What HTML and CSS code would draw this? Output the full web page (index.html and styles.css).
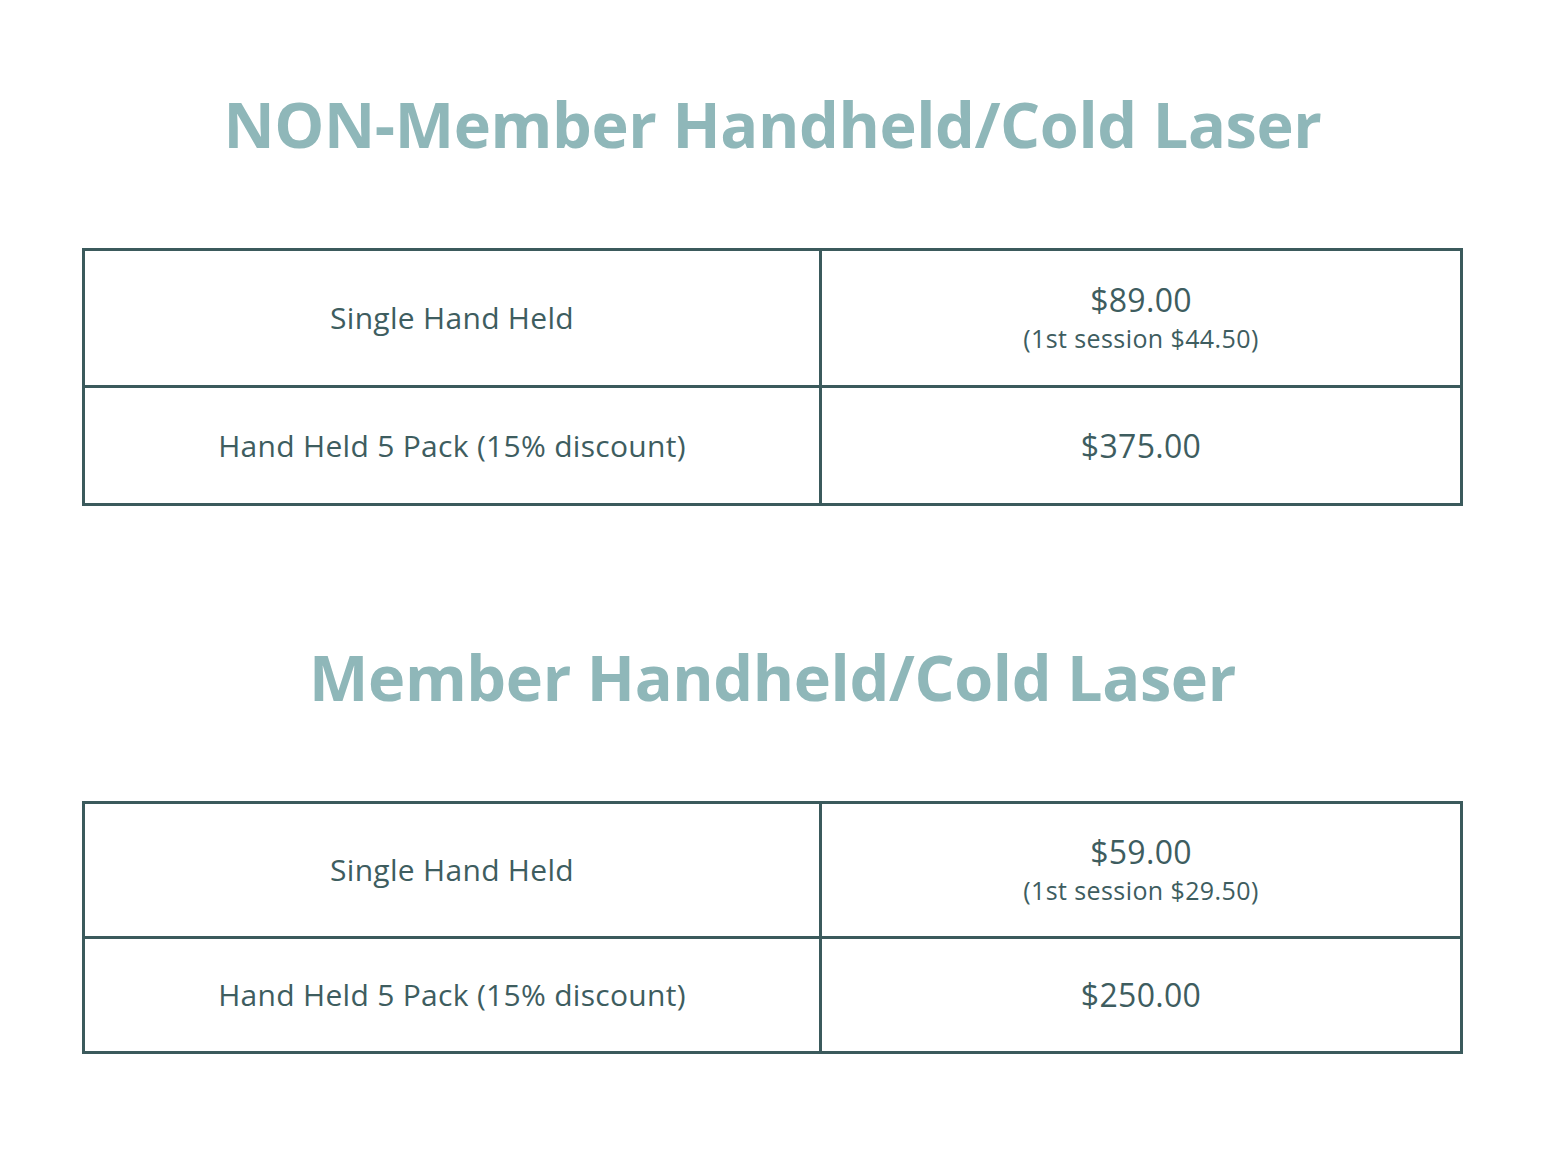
FILE: index.html
```html
<!DOCTYPE html>
<html>
<head>
<meta charset="utf-8">
<link rel="stylesheet" href="styles.css">
</head>
<body>
<main class="page">
  <section class="block">
    <h1 class="title">NON-Member Handheld/Cold Laser</h1>
    <table class="prices">
      <tr class="row-tall">
        <td class="name">Single Hand Held</td>
        <td class="price"><div class="amount">$89.00</div><div class="note">(1st session $44.50)</div></td>
      </tr>
      <tr class="row-short">
        <td class="name">Hand Held 5 Pack (15% discount)</td>
        <td class="price"><div class="amount">$375.00</div></td>
      </tr>
    </table>
  </section>
  <section class="block block-second">
    <h1 class="title">Member Handheld/Cold Laser</h1>
    <table class="prices prices-second">
      <tr class="row-tall">
        <td class="name">Single Hand Held</td>
        <td class="price"><div class="amount">$59.00</div><div class="note">(1st session $29.50)</div></td>
      </tr>
      <tr class="row-short">
        <td class="name">Hand Held 5 Pack (15% discount)</td>
        <td class="price"><div class="amount">$250.00</div></td>
      </tr>
    </table>
  </section>
</main>
</body>
</html>
```
FILE: styles.css
```css
* { box-sizing: border-box; }
html, body { margin: 0; padding: 0; background: #ffffff; }
body { font-family: "Open Sans", "Noto Sans", sans-serif; color: #3e5d5f; }
.page { padding: 84px 82px 0 82px; }
.title {
  margin: 0;
  text-align: center;
  font-size: 63px;
  line-height: 80px;
  font-weight: 700;
  color: #8fb7b9;
  letter-spacing: -0.4px;
}
.prices {
  margin-top: 84px;
  width: 100%;
  border-collapse: collapse;
  border: 3px solid #3b5a5c;
}
.prices td {
  border: 3px solid #3b5a5c;
  text-align: center;
  vertical-align: middle;
  padding: 0;
}
.prices td.name { width: 737px; }
.row-tall { height: 137px; }
.row-short { height: 118px; }
.prices-second .row-tall { height: 135px; }
.prices-second .row-short { height: 115px; }
.name { font-size: 30px; line-height: 38px; letter-spacing: 0.3px; }
.amount { font-size: 32px; line-height: 40px; letter-spacing: 0.3px; }
.row-short .amount { line-height: 38px; }
.note { font-size: 25px; line-height: 36px; letter-spacing: 0.4px; }
.block-second { margin-top: 131px; }
```
